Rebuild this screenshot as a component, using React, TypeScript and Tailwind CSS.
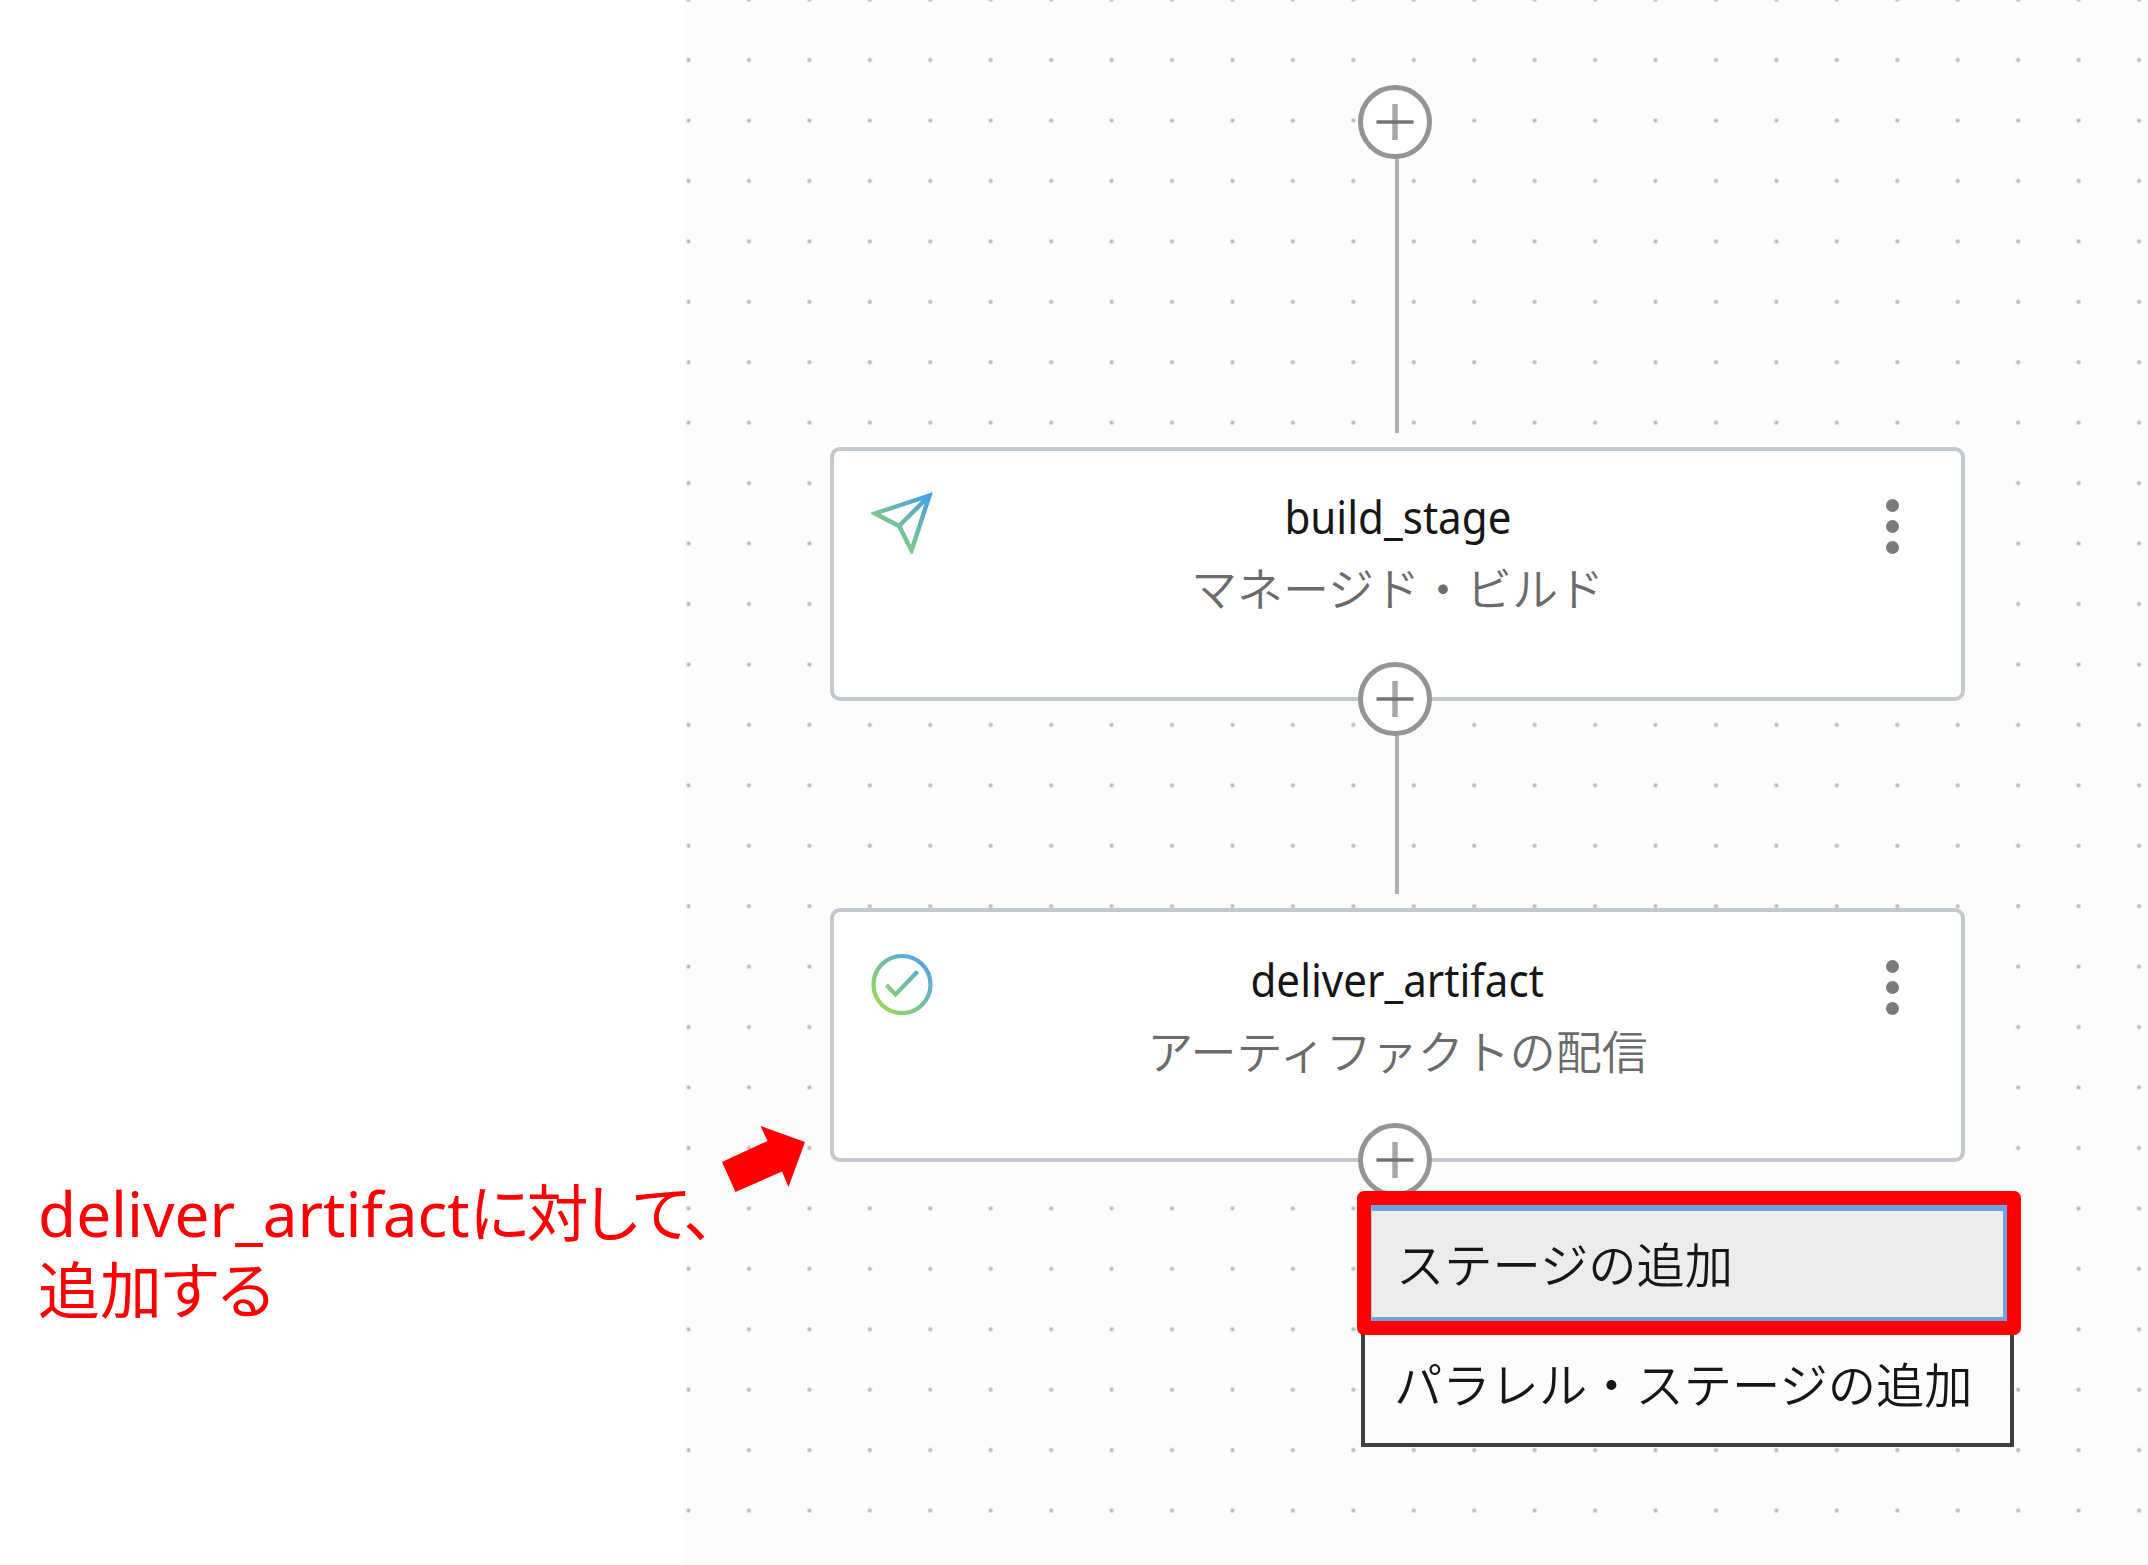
import type { ReactNode } from "react";

function AddButton({ className }: { className: string }) {
  return (
    <button
      className={`absolute left-[674px] flex size-[74px] items-center justify-center rounded-full border-[5px] border-[#949494] bg-white ${className}`}
    >
      <svg viewBox="0 0 40 40" className="size-10 shrink-0">
        <path d="M20 2v36" stroke="#a8a8a8" strokeWidth="5.5" />
        <path d="M1.500 20h37" stroke="#757575" strokeWidth="3.600" />
      </svg>
    </button>
  );
}

function Connector({ className }: { className: string }) {
  return <div className={`absolute left-[711px] w-[4px] bg-[#b0b0b4] ${className}`} />;
}

function Kebab() {
  return (
    <div className="flex flex-col gap-[8px]">
      <span className="size-[13px] rounded-full bg-[#7a7a7a]" />
      <span className="size-[13px] rounded-full bg-[#7a7a7a]" />
      <span className="size-[13px] rounded-full bg-[#7a7a7a]" />
    </div>
  );
}

function SendIcon() {
  return (
    <svg viewBox="0 0 62 62" className="size-[62px]" fill="none">
      <defs>
        <linearGradient id="send" gradientUnits="userSpaceOnUse" x1="60" y1="2" x2="18" y2="46">
          <stop offset="0" stopColor="#459be8" />
          <stop offset="1" stopColor="#83cd86" />
        </linearGradient>
      </defs>
      <path
        d="M58.500 3.500 4 21.500 28 34 40.500 58.500Z M58.500 3.500 28 34"
        stroke="url(#send)"
        strokeWidth="4.400"
      />
    </svg>
  );
}

function CheckIcon() {
  return (
    <svg viewBox="0 0 62 62" className="size-[62px]" fill="none">
      <defs>
        <linearGradient id="check" gradientUnits="userSpaceOnUse" x1="52" y1="10" x2="10" y2="52">
          <stop offset="0" stopColor="#55a5e6" />
          <stop offset="1" stopColor="#93d95a" />
        </linearGradient>
      </defs>
      <circle cx="31" cy="31.500" r="28.500" stroke="url(#check)" strokeWidth="4.200" />
      <path d="M15.500 32 24.500 41.500 46.500 18.500" stroke="url(#check)" strokeWidth="4.200" />
    </svg>
  );
}

function StageCard({
  className,
  icon,
  name,
  kind,
  textClass,
}: {
  className: string;
  icon: ReactNode;
  name: string;
  kind: string;
  textClass: string;
}) {
  return (
    <div
      className={`absolute left-[146px] flex w-[1135px] items-start justify-between rounded-[10px] border-[4px] border-[#c3c8cf] bg-white pl-[37px] pr-[62px] ${className}`}
    >
      {icon}
      <div className={`flex flex-1 flex-col items-center whitespace-nowrap pr-[48px] pl-[24px] ${textClass}`}>
        <div className="scale-x-[0.916] text-[46px] leading-[60px] text-[#161616]">{name}</div>
        <div className="mt-[7px] text-[46px] font-[350] leading-[70px] text-[#6b6b6b]">{kind}</div>
      </div>
      <div className="pt-[7px]">
        <Kebab />
      </div>
    </div>
  );
}

export default function App() {
  return (
    <div className="relative flex h-[1565px] w-[2148px] overflow-hidden bg-white font-['Noto_Sans','Noto_Sans_CJK_JP',sans-serif]">
      <aside className="flex w-[684px] shrink-0 flex-col pl-[38px] pt-[1175px]">
        <p className="relative z-10 whitespace-nowrap text-[62px] leading-[77px] text-[#ff0000]">
          <span>deliver_artifact</span>
          <span className="tracking-[-3px] [font-feature-settings:'palt']">に対して、</span>
          <br />
          <span className="[font-feature-settings:'palt']">追加する</span>
        </p>
      </aside>

      <main className="relative flex-1 bg-[#fcfcfc] bg-[radial-gradient(circle,#b4b4b4_0.8px,transparent_3px)] bg-[length:60.45px_60.45px] bg-[position:-25.7px_-30.6px]">
        <Connector className="top-[157px] h-[276px]" />
        <Connector className="top-[734px] h-[160px]" />

        <StageCard
          className="top-[447px] h-[254px] pt-[41px]"
          icon={<SendIcon />}
          name="build_stage"
          kind="マネージド・ビルド"
          textClass="-mt-[6px]"
        />
        <StageCard
          className="top-[908px] h-[254px] pt-[41px]"
          icon={<CheckIcon />}
          name="deliver_artifact"
          kind="アーティファクトの配信"
          textClass="-mt-[4px]"
        />

        <AddButton className="top-[85px]" />
        <AddButton className="top-[662px]" />
        <AddButton className="top-[1123px]" />

        <div className="absolute left-[673px] top-[1191px] w-[664px] text-[48.3px] font-[350] text-[#161616]">
          <div className="relative z-10 h-[144px] rounded-[7px] border-[14px] border-[#ff0000] bg-[#ececec]">
            <div className="flex h-full items-center border-b-[4px] border-l border-r-[4px] border-t-[6px] border-[#6ea3e2] border-l-[#b5cdea] pl-[24px]">
              ステージの追加
            </div>
          </div>
          <div className="-mt-[14px] ml-[4px] flex h-[126px] w-[653px] items-center whitespace-nowrap border-[4px] border-[#3f3f3f] bg-[#fcfcfc] pl-[29px]">
            パラレル・ステージの追加
          </div>
        </div>

        <svg viewBox="0 0 90 70" className="absolute left-[34px] top-[1122px] h-[70px] w-[90px]">
          <path d="M42.500 4 87 20 70.500 65 64 49.500 17.500 70 4 40 49.500 19Z" fill="#ff0000" />
        </svg>
      </main>
    </div>
  );
}
